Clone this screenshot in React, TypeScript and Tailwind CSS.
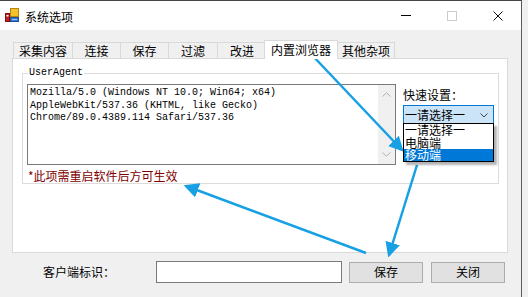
import React from 'react';

const cjk = "font-['Noto_Sans_CJK_SC','Noto_Sans',sans-serif]";
const mono = "font-['Liberation_Mono','DejaVu_Sans_Mono',monospace]";

const tabs = [
    { label: '采集内容', w: 'w-[59px]' },
    { label: '连接', w: 'w-[48px]' },
    { label: '保存', w: 'w-[48px]' },
    { label: '过滤', w: 'w-[49px]' },
    { label: '改进', w: 'w-[49px]' },
];

const AppIcon = () => (
    <svg width="14" height="15" viewBox="0 0 14 15">
        <rect x="0.5" y="5.5" width="4" height="8" fill="#c8202a" stroke="#7a1010" />
        <rect x="1.5" y="7" width="2" height="1.5" fill="#fff" />
        <rect x="5.5" y="0.5" width="8" height="8" fill="#f6c22c" stroke="#b8860b" />
        <rect x="5.5" y="9.5" width="8" height="4" fill="#3b78d0" stroke="#1f4f9a" />
        <rect x="7" y="11" width="5" height="1" fill="#9cc3f0" />
    </svg>
);

const Arrows = () => (
    <svg className="absolute left-0 top-0 pointer-events-none" width="528" height="297" viewBox="0 0 528 297">
        <defs>
            <marker id="ah" markerWidth="6" markerHeight="6" refX="5" refY="3" orient="auto" markerUnits="strokeWidth">
                <path d="M0,0 L6,3 L0,6 z" fill="#17a0e3" />
            </marker>
        </defs>
        <line x1="312" y1="55" x2="402" y2="150" stroke="#17a0e3" strokeWidth="2.5" markerEnd="url(#ah)" />
        <line x1="417" y1="165" x2="389" y2="255" stroke="#17a0e3" strokeWidth="2.5" markerEnd="url(#ah)" />
        <line x1="366" y1="253" x2="186" y2="186" stroke="#17a0e3" strokeWidth="2.5" markerEnd="url(#ah)" />
    </svg>
);

export default function App() {
    return (
        <div className={`relative flex h-[297px] w-[528px] overflow-hidden bg-[#f0f0f0] ${cjk} text-[12px] text-black`}>
            <div className="flex w-[522px] flex-col border-r border-[#5a5a5a] border-t border-t-[#444]">
                {/* title bar */}
                <div className="flex h-[29px] items-center bg-white">
                    <div className="ml-[5px] mt-[-1px]"><AppIcon /></div>
                    <span className="ml-[6px] mt-[2px]">系统选项</span>
                    <div className="ml-auto flex h-full">
                        <div className="flex w-[46px] items-center justify-center">
                            <div className="h-px w-[10px] bg-black" />
                        </div>
                        <div className="flex w-[46px] items-center justify-center">
                            <div className="h-[10px] w-[10px] border border-[#cccccc]" />
                        </div>
                        <div className="flex w-[46px] items-center justify-center">
                            <svg width="10" height="10" viewBox="0 0 10 10">
                                <path d="M0.5,0.5 L9.5,9.5 M9.5,0.5 L0.5,9.5" stroke="#111" strokeWidth="1" />
                            </svg>
                        </div>
                    </div>
                </div>

                {/* tab strip */}
                <div className="mt-[10px] ml-[13px] flex h-[18px] items-end">
                    {tabs.map((t) => (
                        <div key={t.label} className={`${t.w} flex h-[16px] items-center justify-center border-l border-t border-[#d9d9d9] bg-[#f0f0f0] leading-none`}>
                            {t.label}
                        </div>
                    ))}
                    <div className="relative z-10 -mb-px ml-[-2px] flex h-[19px] w-[74px] items-center justify-center border-x border-t border-[#d9d9d9] bg-white leading-none">
                        内置浏览器
                    </div>
                    <div className="flex h-[16px] w-[57px] items-center justify-center border-r border-t border-[#d9d9d9] bg-[#f0f0f0] leading-none">
                        其他杂项
                    </div>
                </div>

                {/* tab page */}
                <div className="ml-[12px] h-[195px] w-[496px] border border-[#d9d9d9] bg-white">
                    <fieldset className="ml-[9px] mt-[8px] h-[117px] w-[476px] border border-[#dcdcdc] px-[4px] pb-0">
                        <legend className={`ml-[1px] px-[1px] ${mono} text-[10px] leading-[12px]`}>UserAgent</legend>
                        <div className="relative mt-[5px] flex">
                            <div className="flex h-[81px] w-[369px] border border-[#7a7a7a] bg-white">
                                <div className={`flex-1 pl-[2px] pt-[2px] ${mono} text-[10px] leading-[12.5px] whitespace-pre`}>
                                    <div>Mozilla/5.0 (Windows NT 10.0; Win64; x64)</div>
                                    <div>AppleWebKit/537.36 (KHTML, like Gecko)</div>
                                    <div>Chrome/89.0.4389.114 Safari/537.36</div>
                                </div>
                                <div className="flex w-[17px] flex-col items-center justify-between bg-[#f0f0f0] py-[7px]">
                                    <svg width="9" height="5" viewBox="0 0 9 5"><path d="M0.5,4.5 L4.5,0.8 L8.5,4.5" fill="none" stroke="#b0b0b0" /></svg>
                                    <svg width="9" height="5" viewBox="0 0 9 5"><path d="M0.5,0.5 L4.5,4.2 L8.5,0.5" fill="none" stroke="#b0b0b0" /></svg>
                                </div>
                            </div>
                            <div className="relative ml-[7px] flex flex-col">
                                <div className="mt-[3px] leading-[16px]">快速设置：</div>
                                <div className="mt-[2px] flex h-[20px] w-[91px] items-center border border-[#0078d7] bg-[#cce4f7] pl-[1px] pr-[5px]">
                                    <span className="leading-none">一请选择一</span>
                                    <svg className="ml-auto" width="8" height="5" viewBox="0 0 8 5"><path d="M0.5,0.5 L4,4 L7.5,0.5" fill="none" stroke="#444" /></svg>
                                </div>
                                <div className="absolute left-0 top-[39px] z-10 w-[91px] border border-black bg-white shadow-[3px_3px_2px_rgba(0,0,0,0.3)]">
                                    <div className="h-[12px] pl-[1px] leading-[12px]">一请选择一</div>
                                    <div className="h-[13px] pl-[1px] leading-[13px]">电脑端</div>
                                    <div className="h-[12px] bg-[#0078d7] pl-[1px] leading-[12px] text-white">移动端</div>
                                </div>
                            </div>
                        </div>
                        <div className="mt-[4px] pl-[1px] leading-[13px] text-[#800000]">*此项需重启软件后方可生效</div>
                    </fieldset>
                </div>

                {/* bottom row */}
                <div className="mt-[8px] flex h-[22px] items-center pl-[43px]">
                    <div className="w-[113px] leading-none">客户端标识：</div>
                    <div className="h-[22px] w-[186px] border border-[#7a7a7a] bg-white" />
                    <div className="ml-[7px] flex h-[21px] w-[74px] items-center justify-center border border-[#adadad] bg-[#e1e1e1] leading-none">保存</div>
                    <div className="ml-[8px] flex h-[21px] w-[74px] items-center justify-center border border-[#adadad] bg-[#e1e1e1] leading-none">关闭</div>
                </div>
            </div>
            <div className="flex-1 bg-[#f0f0f0]" />
            <Arrows />
        </div>
    );
}
